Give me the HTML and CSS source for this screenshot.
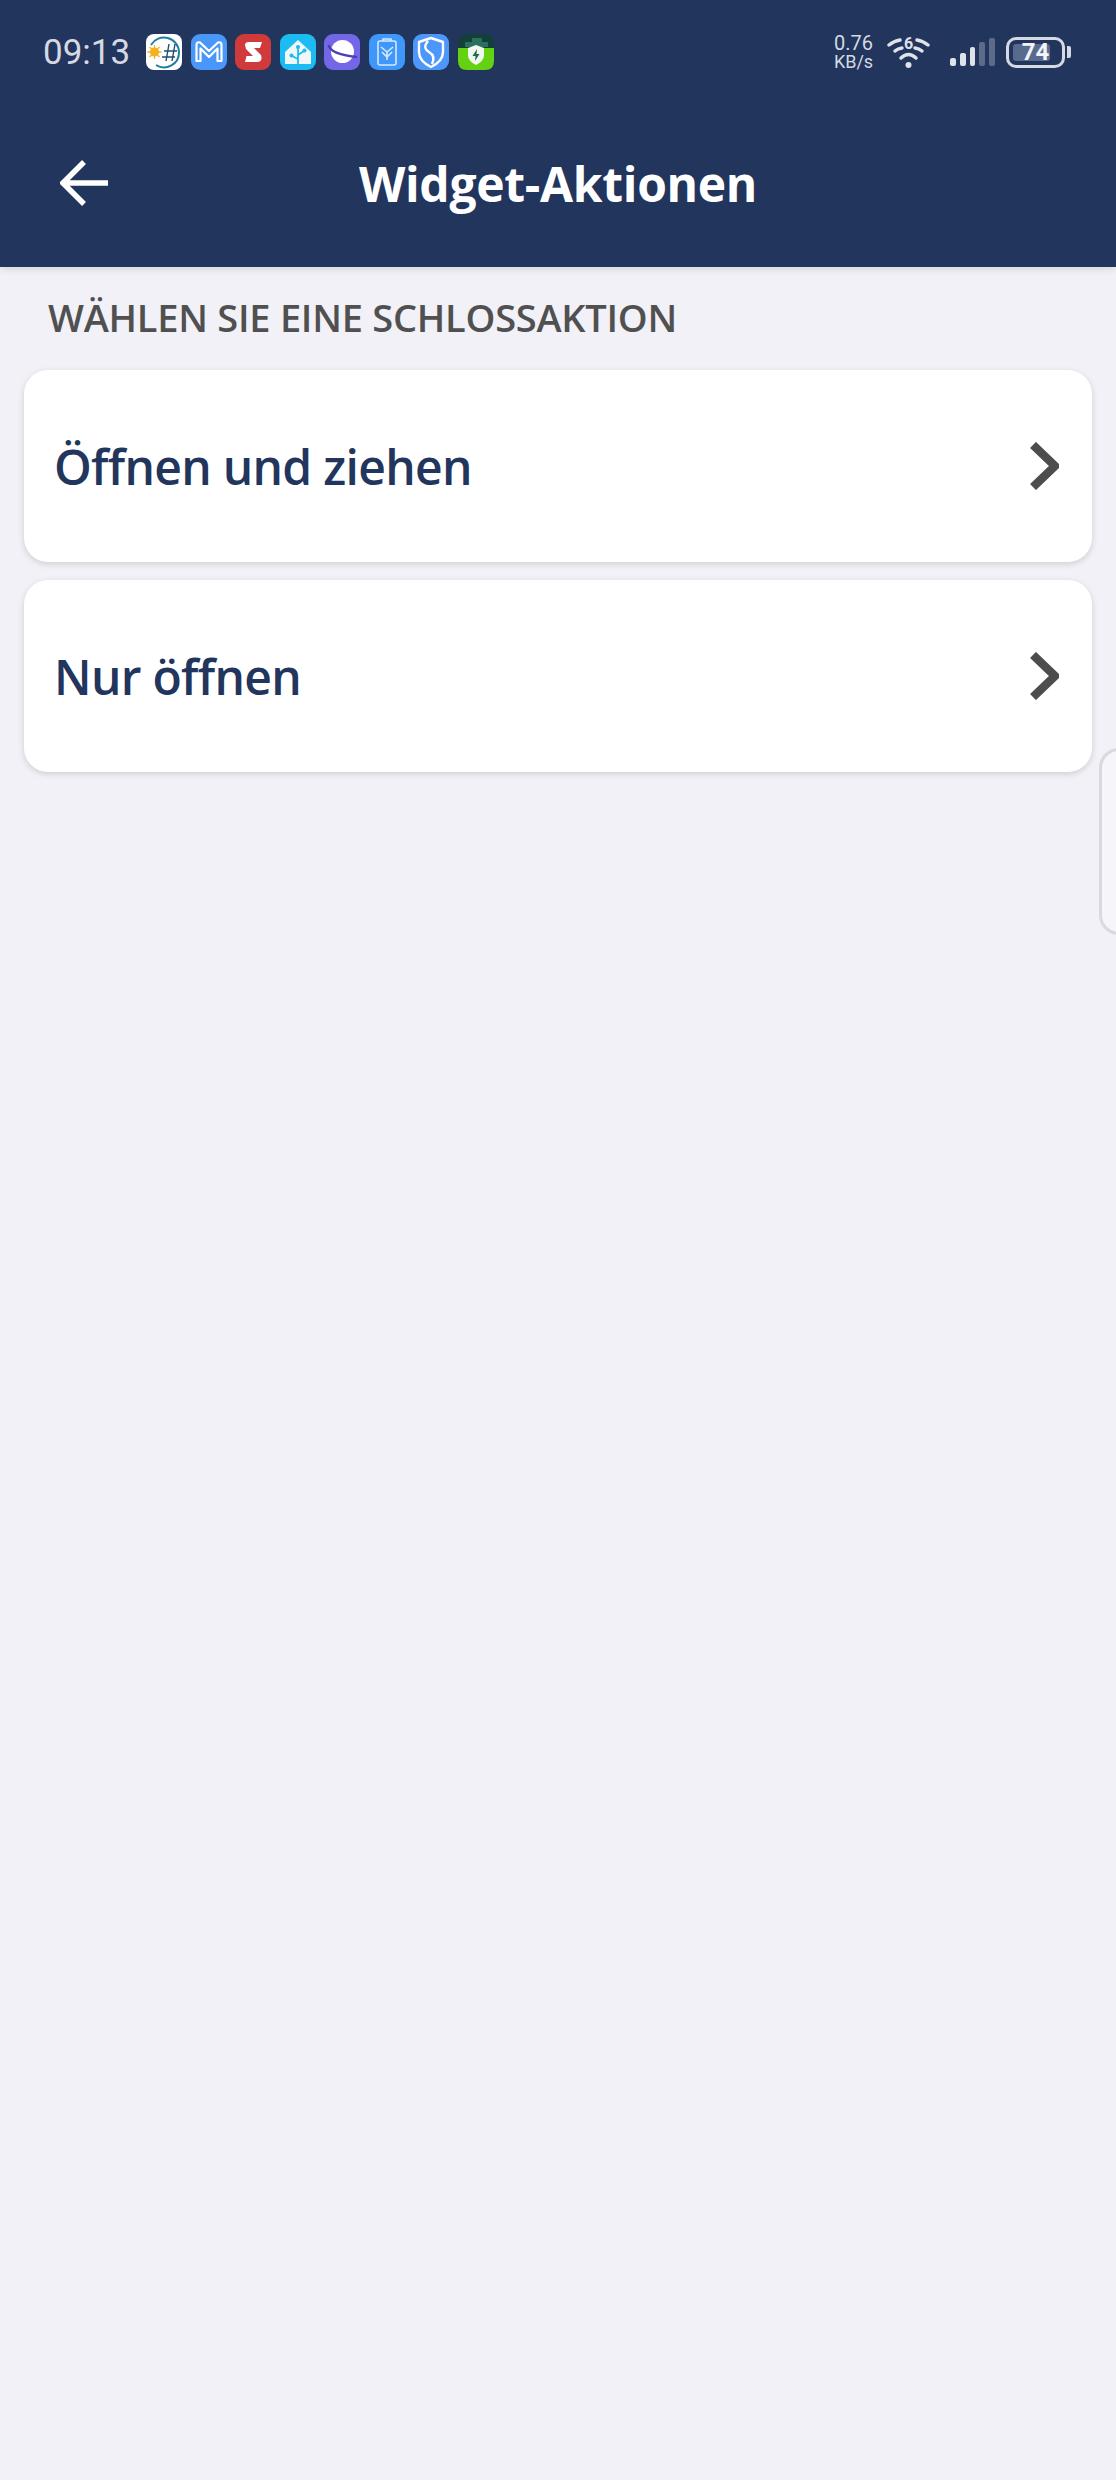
FILE: index.html
```html
<!DOCTYPE html>
<html lang="de">
<head>
  <meta charset="UTF-8">
  <title>Widget-Aktionen</title>
  <link rel="stylesheet" href="styles.css">
</head>
<body>

<header class="top-bar">
  <div class="status-bar">
    <span class="clock">09:13</span>
    <div class="notif-icons">
      <!-- weather -->
      <svg class="notif" viewBox="0 0 36 36">
        <rect width="36" height="36" rx="8" fill="#fff"/>
        <path d="M5 11A15 15 0 0 1 33 18A15 15 0 0 1 10 31" fill="none" stroke="#1f7f9c" stroke-width="2"/>
        <circle cx="8.500" cy="18" r="4.500" fill="#f7b01e"/>
        <path d="M8.500 11v14M1.500 18h14M3.500 13l10 10M3.500 23l10-10" stroke="#f7b01e" stroke-width="1.300"/>
        <path d="M18 17h13M16 23h13M23 10l-3 17M29 10l-3 17" stroke="#1d4f72" stroke-width="1.400" fill="none"/>
      </svg>
      <!-- mail -->
      <svg class="notif" viewBox="0 0 36 36">
        <rect width="36" height="36" rx="9" fill="#4a97fa"/>
        <path d="M5.500 27V11Q5.500 7.500 9 8.500L18 17L27 8.500Q30.500 7.500 30.500 11V27H26.500V14.500L18 23L9.500 14.500V27Z" fill="none" stroke="#fff" stroke-width="2.200" stroke-linejoin="round"/>
      </svg>
      <!-- red S -->
      <svg class="notif" viewBox="0 0 36 36">
        <rect width="36" height="36" rx="9" fill="#d03a3a"/>
        <path d="M10 11Q10 8 14 8H27L25 14H19L26 21Q28 28 22 28H10L11.500 22H18L11 15Z" fill="#fff"/>
      </svg>
      <!-- home -->
      <svg class="notif" viewBox="0 0 36 36">
        <rect width="36" height="36" rx="9" fill="#1cbcf2"/>
        <path d="M18 6L31 18V30H5V18Z" fill="#f1f6f8"/>
        <path d="M18 30V11M18 25l-6-3M18 21l6-4" stroke="#1cbcf2" stroke-width="1.800" fill="none"/>
        <circle cx="18" cy="13" r="2" fill="#1cbcf2"/>
        <circle cx="11.500" cy="21.500" r="2" fill="#1cbcf2"/>
        <circle cx="24.500" cy="16.500" r="2" fill="#1cbcf2"/>
      </svg>
      <!-- browser planet -->
      <svg class="notif" viewBox="0 0 36 36">
        <rect width="36" height="36" rx="9" fill="#7367e8"/>
        <circle cx="18.500" cy="17.500" r="11.500" fill="#fff"/>
        <path d="M5 12Q7 20 32 23" fill="none" stroke="#4b3fb5" stroke-width="2.600" stroke-linecap="round"/>
      </svg>
      <!-- battery -->
      <svg class="notif" viewBox="0 0 36 36">
        <rect width="36" height="36" rx="9" fill="#3f97fb"/>
        <rect x="9" y="7" width="18" height="24" rx="2" fill="none" stroke="#d6e9ff" stroke-width="1.600"/>
        <path d="M14 7V5H22V7" fill="none" stroke="#d6e9ff" stroke-width="1.600"/>
        <path d="M12 13L18 18L24 13M13 18L18 23L23 18M18 18V26" fill="none" stroke="#d6e9ff" stroke-width="1.600"/>
      </svg>
      <!-- shield -->
      <svg class="notif" viewBox="0 0 36 36">
        <rect width="36" height="36" rx="9" fill="#4d97fb"/>
        <path d="M18 4L30 8V18Q30 27 18 33Q6 27 6 18V8Z" fill="none" stroke="#fff" stroke-width="2.400" stroke-linejoin="round"/>
        <path d="M15 7Q9 14 16 18Q23 22 19 30" fill="none" stroke="#fff" stroke-width="2.400"/>
      </svg>
      <!-- green cleaner -->
      <svg class="notif" viewBox="0 0 36 36">
        <rect width="36" height="36" rx="9" fill="#123f38"/>
        <path d="M7 13V8H14V4H24V8H30V13Z" fill="#2a6f5f"/>
        <path d="M0 14H36V27Q36 36 27 36H9Q0 36 0 27Z" fill="#64d212"/>
        <path d="M18 11L26 14V21Q26 27 18 31Q10 27 10 21V14Z" fill="#f2f8ee"/>
        <path d="M19 15L14.500 22H17.500L17 27L21.500 20H18.500Z" fill="#1c6b55"/>
      </svg>
    </div>
    <div class="sys-icons">
      <div class="net-speed">
        <span class="speed-val">0.76</span>
        <span class="speed-unit">KB/s</span>
      </div>
      <svg class="wifi" viewBox="0 0 43 34">
        <g fill="none" stroke="#dfe2ea" stroke-linecap="round">
          <path d="M2 10Q7 6 13 5M30 5Q36 6 41 10" stroke-width="3.500"/>
          <path d="M8 16Q11 13.500 15 13M28 13Q32 13.500 35 16" stroke-width="3.500"/>
          <path d="M14 23Q21.500 16 29 23" stroke-width="3.500"/>
        </g>
        <circle cx="21.500" cy="30" r="3" fill="#dfe2ea"/>
        <text class="wifi-six" x="21.500" y="14" text-anchor="middle">6</text>
      </svg>
      <div class="signal">
        <i class="bar bar-1"></i>
        <i class="bar bar-2"></i>
        <i class="bar bar-3"></i>
        <i class="bar bar-4 off"></i>
        <i class="bar bar-5 off"></i>
      </div>
      <div class="battery">
        <div class="battery-body">
          <i class="battery-fill"></i>
          <span class="battery-num">74</span>
        </div>
        <i class="battery-tip"></i>
      </div>
    </div>
  </div>

  <div class="toolbar">
    <a class="back-btn" href="#">
      <svg viewBox="0 0 48 48" width="48" height="48">
        <path d="M24 3L3 24L24 45M3 24H48" fill="none" stroke="#fff" stroke-width="5.500"/>
      </svg>
    </a>
    <h1>Widget-Aktionen</h1>
  </div>
</header>

<main class="content">
  <h2 class="section-title">WÄHLEN SIE EINE SCHLOSSAKTION</h2>

  <a class="action-card" href="#">
    <span>Öffnen und ziehen</span>
    <svg class="chevron" viewBox="0 0 29 48"><path d="M3 3L25 24L3 45" fill="none" stroke="#4d4d4d" stroke-width="8.500"/></svg>
  </a>
  <a class="action-card" href="#">
    <span>Nur öffnen</span>
    <svg class="chevron" viewBox="0 0 29 48"><path d="M3 3L25 24L3 45" fill="none" stroke="#4d4d4d" stroke-width="8.500"/></svg>
  </a>
</main>

<div class="side-tab"></div>

</body>
</html>
```

FILE: styles.css
```css
* {
  box-sizing: border-box;
}
body {
  margin: 0;
  height: 2480px;
  background: #f1f1f7;
  font-family: "Open Sans", "Noto Sans", sans-serif;
  overflow: hidden;
  position: relative;
}

/* top bar */
.top-bar {
  height: 267px;
  background: #22355c;
  box-shadow: 0 2px 8px rgba(0,0,0,0.12);
  padding-top: 34px;
}
.status-bar {
  display: flex;
  align-items: center;
  height: 36px;
  padding: 0 45px 0 43px;
}
.clock {
  font-family: Roboto, sans-serif;
  font-size: 35px;
  color: #d5d9e3;
  width: 103px;
}
.notif-icons {
  display: flex;
  gap: 8.500px;
}
.notif {
  width: 36px;
  height: 36px;
  display: block;
}
.sys-icons {
  margin-left: auto;
  display: flex;
  align-items: center;
}
.net-speed {
  display: flex;
  flex-direction: column;
  align-items: center;
  width: 41px;
  font-family: Roboto, sans-serif;
  color: #d5d9e3;
  line-height: 1;
  margin-right: 13px;
}
.speed-val {
  font-size: 20px;
}
.speed-unit {
  font-size: 18px;
}
.wifi {
  width: 43px;
  height: 34px;
  margin-right: 20px;
}
.wifi-six {
  font-family: Roboto, sans-serif;
  font-size: 16px;
  font-weight: 700;
  fill: #dfe2ea;
}
.signal {
  display: flex;
  align-items: flex-end;
  gap: 4px;
  height: 28px;
  margin-right: 11px;
}
.bar {
  display: block;
  width: 5.800px;
  background: #dfe2ea;
  border-radius: 2px;
}
.bar.off {
  background: #5d6b8a;
}
.bar-1 { height: 8px; }
.bar-2 { height: 13px; }
.bar-3 { height: 19px; }
.bar-4 { height: 24px; }
.bar-5 { height: 28px; }
.battery {
  display: flex;
  align-items: center;
  gap: 2px;
}
.battery-body {
  position: relative;
  width: 59px;
  height: 31px;
  border: 3px solid #d5d9e3;
  border-radius: 10px;
  display: flex;
  align-items: center;
  justify-content: center;
}
.battery-fill {
  position: absolute;
  left: 4px;
  top: 4px;
  bottom: 4px;
  width: 37px;
  background: #5a6a8e;
  border-radius: 3px;
}
.battery-num {
  position: relative;
  font-family: Roboto, sans-serif;
  font-weight: 700;
  font-size: 24px;
  color: #f2f4f8;
  line-height: 1;
}
.battery-tip {
  display: block;
  width: 4px;
  height: 12px;
  background: #d5d9e3;
  border-radius: 0 2px 2px 0;
}

.toolbar {
  position: relative;
  display: flex;
  justify-content: center;
  align-items: center;
  margin-top: 83px;
  height: 60px;
}
.toolbar h1 {
  margin: 0;
  font-size: 48px;
  font-weight: 700;
  color: #fff;
  letter-spacing: -0.300px;
}
.back-btn {
  position: absolute;
  left: 60px;
  top: 6px;
  display: block;
  height: 48px;
}

/* list */
.content {
  padding: 0 24px;
}
.section-title {
  margin: 0;
  padding: 0 0 0 24px;
  height: 103px;
  line-height: 100px;
  font-size: 38px;
  font-weight: 600;
  color: #505050;
  letter-spacing: -0.250px;
}
.action-card {
  display: flex;
  justify-content: space-between;
  align-items: center;
  height: 192px;
  margin-bottom: 18px;
  padding: 0 33px 0 30px;
  background: #fff;
  border-radius: 24px;
  box-shadow: 0 2px 6px rgba(0,0,0,0.15);
  color: #22355c;
  font-size: 48px;
  font-weight: 600;
  letter-spacing: -0.700px;
  text-decoration: none;
}
.chevron {
  width: 29px;
  height: 48px;
}

/* floating handle on the right edge */
.side-tab {
  position: absolute;
  left: 1099px;
  top: 748px;
  width: 40px;
  height: 187px;
  background: #f5f5fa;
  border: 3px solid #d9d9df;
  border-radius: 20px;
}
```
